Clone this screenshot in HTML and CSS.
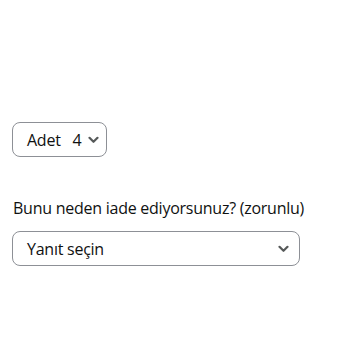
FILE: index.html
```html
<!DOCTYPE html>
<html lang="tr">
<head>
<meta charset="utf-8">
<link rel="stylesheet" href="styles.css">
</head>
<body>
<div class="page">
  <div class="qty">
    <span class="qty-label">Adet</span>
    <span class="qty-value">4</span>
    <svg class="chev" width="11" height="8" viewBox="0 0 11 8"><path d="M1.5 1.8 L5.5 5.8 L9.5 1.8" fill="none" stroke="#565959" stroke-width="2.2" stroke-linecap="round" stroke-linejoin="round"/></svg>
  </div>
  <div class="field">
    <label class="label">Bunu neden iade ediyorsunuz? (zorunlu)</label>
    <div class="select">
      <span class="select-text">Yanıt seçin</span>
      <svg class="chev" width="11" height="8" viewBox="0 0 11 8"><path d="M1.5 1.8 L5.5 5.8 L9.5 1.8" fill="none" stroke="#565959" stroke-width="2.2" stroke-linecap="round" stroke-linejoin="round"/></svg>
    </div>
  </div>
</div>
</body>
</html>
```
FILE: styles.css
```css
html, body {
  margin: 0;
  padding: 0;
  background: #fff;
}
body {
  font-family: "Open Sans", "Noto Sans", sans-serif;
  color: #0f1111;
  letter-spacing: -0.25px;
}
.page {
  padding: 122px 0 0 12px;
}
.qty {
  display: inline-flex;
  align-items: center;
  box-sizing: border-box;
  width: 95px;
  height: 35px;
  border: 1px solid #8d9096;
  border-radius: 8px;
  padding: 0 8px 0 14px;
  font-size: 16px;
}
.qty-label {
  margin-right: 12px;
}
.qty-value {
  margin-right: 6px;
}
.field {
  margin-top: 40px;
}
.label {
  display: block;
  font-size: 16px;
  line-height: 22px;
  margin-left: 1px;
}
.select {
  display: flex;
  align-items: center;
  justify-content: space-between;
  box-sizing: border-box;
  width: 288px;
  height: 35px;
  margin-top: 12px;
  border: 1px solid #8d9096;
  border-radius: 8px;
  padding: 0 10px 0 14px;
  font-size: 16px;
}
.chev {
  display: block;
  flex-shrink: 0;
}
```
